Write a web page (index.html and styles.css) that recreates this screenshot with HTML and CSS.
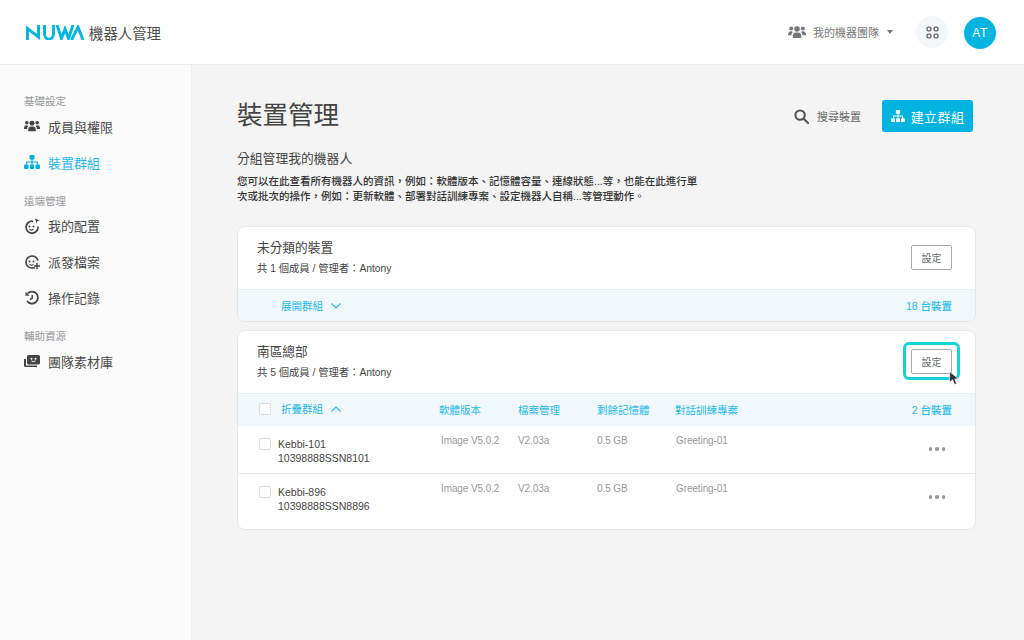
FILE: index.html
```html
<!DOCTYPE html>
<html lang="zh-Hant">
<head>
    <meta charset="UTF-8">
    <meta name="viewport" content="width=device-width, initial-scale=1.0">
    <title>機器人管理</title>
    <link rel="stylesheet" href="styles.css">
</head>
<body>

    <svg class="defs" width="0" height="0">
        <symbol id="org" viewBox="0 0 16 14">
            <rect x="5.5" y="0" width="5" height="4.5" rx="1"/>
            <rect x="0" y="9.5" width="4.5" height="4.5" rx="1"/>
            <rect x="5.75" y="9.5" width="4.5" height="4.5" rx="1"/>
            <rect x="11.5" y="9.5" width="4.5" height="4.5" rx="1"/>
            <path d="M7.4 4h1.2v2.4h5.300v3.200h-1.200V7.600H8.600v2H7.400v-2H3.300v2H2.100V6.400h5.300z"/>
        </symbol>
        <symbol id="users" viewBox="0 0 18 14">
            <circle cx="9" cy="4" r="2.8"/>
            <circle cx="3.2" cy="3.4" r="2"/>
            <circle cx="14.8" cy="3.4" r="2"/>
            <path d="M4.8 13v-2.600C4.800 8.600 6.200 7.600 7.600 7.600h2.800c1.400 0 2.800 1 2.800 2.800V13z"/>
            <path d="M0 9.600C0 7.600 1.200 6.200 3 6.200c.8 0 1.400.2 1.900.7-.9.8-1.400 2-1.400 3.400H0zM18 9.600c0-2-1.200-3.400-3-3.400-.8 0-1.400.2-1.900.7.9.8 1.400 2 1.400 3.400H18z"/>
        </symbol>
    </svg>

    <header class="topbar">
        <div class="brand">
            <svg class="logo" viewBox="0 0 58 15" width="58" height="15">
                <path d="M1.5 15V3.500L12.500 12V0M18.500 0v8.500c0 7.500 9 7.500 9 0V0M31 0l4.500 13.500L39 4l3.500 9.500L47 0M45.500 15L52 2l5 13" fill="none" stroke="#00b4e0" stroke-width="2.9"/>
            </svg>
            <span class="brand-name">機器人管理</span>
        </div>
        <div class="top-actions">
            <svg class="team-icon"><use href="#users"/></svg>
            <span class="team-name">我的機器團隊</span>
            <span class="caret"></span>
            <button type="button" class="apps-btn">
                <svg viewBox="0 0 12 12" width="13" height="13" fill="none" stroke="#666" stroke-width="1.3">
                    <rect x="1" y="1" width="3.5" height="3.5" rx="1"/>
                    <rect x="7.5" y="1" width="3.5" height="3.5" rx="1"/>
                    <rect x="1" y="7.5" width="3.5" height="3.5" rx="1"/>
                    <rect x="7.5" y="7.5" width="3.5" height="3.5" rx="1"/>
                </svg>
            </button>
            <div class="avatar">AT</div>
        </div>
    </header>

    <div class="layout">
        <nav class="sidebar">
            <div class="nav-label">基礎設定</div>
            <a class="nav-item"><svg class="nav-icon solid"><use href="#users"/></svg>成員與權限</a>
            <a class="nav-item active"><svg class="nav-icon solid"><use href="#org"/></svg>裝置群組</a>

            <div class="nav-label">遠端管理</div>
            <a class="nav-item">
                <svg class="nav-icon" viewBox="0 0 16 16" fill="none" stroke="#444" stroke-width="1.7">
                    <path d="M9 3.300A6 6 0 1 0 14 8.500"/>
                    <circle cx="5.5" cy="8.5" r="1" fill="#444" stroke="none"/>
                    <circle cx="9.5" cy="8.5" r="1" fill="#444" stroke="none"/>
                    <path d="M5.500 11.300q2 1.500 4 0" stroke-width="1.3"/>
                    <path d="M11 .5l4.500 2-2.200.8-.7 2.200z" fill="#444" stroke="none"/>
                </svg>我的配置</a>
            <a class="nav-item">
                <svg class="nav-icon" viewBox="0 0 16 16" fill="none" stroke="#444" stroke-width="1.7">
                    <path d="M14 6.500C13 3.500 10.500 2 8 2a6 6 0 0 0 0 12c1 0 2-.2 2.700-.6"/>
                    <circle cx="5.5" cy="7.5" r="1" fill="#444" stroke="none"/>
                    <circle cx="9.5" cy="7.5" r="1" fill="#444" stroke="none"/>
                    <path d="M5.500 10.500q2 1.300 4 0" stroke-width="1.3"/>
                    <path d="M13 9v6M10 12h6" stroke-width="1.4"/>
                </svg>派發檔案</a>
            <a class="nav-item">
                <svg class="nav-icon" viewBox="0 0 16 16" fill="none" stroke="#444" stroke-width="1.8">
                    <path d="M3.500 3.500A6 6 0 1 1 3 11"/>
                    <path d="M1.500 1.800v4h4z" fill="#444" stroke="none"/>
                    <path d="M8.200 5v3.300L6 9.500" stroke-width="1.5"/>
                </svg>操作記錄</a>

            <div class="nav-label">輔助資源</div>
            <a class="nav-item">
                <svg class="nav-icon" viewBox="0 0 16 16">
                    <path d="M0 6h2v6.500h11V14H1.500A1.500 1.500 0 0 1 0 12.500z" fill="#444"/>
                    <rect x="3" y="2" width="13" height="9.5" rx="1.5" fill="#444"/>
                    <circle cx="7.5" cy="5.8" r="1" fill="#fafafa"/>
                    <circle cx="11.5" cy="5.8" r="1" fill="#fafafa"/>
                    <path d="M7.500 8q2 1.300 4 0" fill="none" stroke="#fafafa"/>
                </svg>團隊素材庫</a>
        </nav>

        <main class="content">
            <div class="page-head">
                <h1>裝置管理</h1>
                <div class="page-actions">
                    <span class="search">
                        <svg viewBox="0 0 16 16" width="15" height="15" fill="none" stroke="#555" stroke-width="2.2">
                            <circle cx="6.5" cy="6.5" r="5"/>
                            <path d="M10.300 10.300L15 15" stroke-linecap="round"/>
                        </svg>
                        搜尋裝置
                    </span>
                    <button type="button" class="primary-btn"><svg class="btn-icon"><use href="#org"/></svg>建立群組</button>
                </div>
            </div>

            <h2>分組管理我的機器人</h2>
            <p class="intro">您可以在此查看所有機器人的資訊&#xFF0C;例如&#xFF1A;軟體版本、記憶體容量、連線狀態...等&#xFF0C;也能在此進行單<br>次或批次的操作&#xFF0C;例如&#xFF1A;更新軟體、部署對話訓練專案、設定機器人自稱...等管理動作。</p>

            <section class="card first">
                <div class="card-head">
                    <div>
                        <h3>未分類的裝置</h3>
                        <div class="meta">共 1 個成員 / 管理者&#xFF1A;Antony</div>
                    </div>
                    <button type="button" class="set-btn">設定</button>
                </div>
                <div class="strip">
                    <span class="toggle">展開群組</span>
                    <svg class="chev" viewBox="0 0 10 6" width="10" height="6"><path d="M.5.5L5 5l4.500-4.500"/></svg>
                    <span class="count">18 台裝置</span>
                </div>
            </section>

            <section class="card">
                <div class="card-head">
                    <div>
                        <h3>南區總部</h3>
                        <div class="meta">共 5 個成員 / 管理者&#xFF1A;Antony</div>
                    </div>
                    <div class="focus-ring"><button type="button" class="set-btn">設定</button></div>
                    <svg class="cursor" viewBox="0 0 11 14" width="12" height="15">
                        <path d="M.5.5v10l2.700-2.400 1.800 4.400 2-.8-1.800-4.300h3.600z" fill="#333" stroke="#fff" stroke-width=".6"/>
                    </svg>
                </div>
                <div class="strip open">
                    <span class="check"></span>
                    <span class="toggle">折疊群組</span>
                    <svg class="chev" viewBox="0 0 10 6" width="10" height="6"><path d="M.5 5.500L5 1l4.500 4.500"/></svg>
                    <span class="col c1">軟體版本</span>
                    <span class="col c2">檔案管理</span>
                    <span class="col c3">剩餘記憶體</span>
                    <span class="col c4">對話訓練專案</span>
                    <span class="count">2 台裝置</span>
                </div>
                <div class="row">
                    <span class="check"></span>
                    <div class="device">Kebbi-101<br>10398888SSN8101</div>
                    <span class="cell c1">Image V5.0.2</span>
                    <span class="cell c2">V2.03a</span>
                    <span class="cell c3">0.5 GB</span>
                    <span class="cell c4">Greeting-01</span>
                    <span class="more"><i></i><i></i><i></i></span>
                </div>
                <div class="row last">
                    <span class="check"></span>
                    <div class="device">Kebbi-896<br>10398888SSN8896</div>
                    <span class="cell c1">Image V5.0.2</span>
                    <span class="cell c2">V2.03a</span>
                    <span class="cell c3">0.5 GB</span>
                    <span class="cell c4">Greeting-01</span>
                    <span class="more"><i></i><i></i><i></i></span>
                </div>
            </section>
        </main>
    </div>

</body>
</html>
```

FILE: styles.css
```css
* {
    box-sizing: border-box;
}
html, body {
    height: 100%;
}
body {
    margin: 0;
    overflow: hidden;
    font-family: "Liberation Sans", "Noto Sans CJK TC", sans-serif;
    color: #444;
    background-color: #f4f4f4;
}
.defs {
    position: absolute;
}
.topbar {
    height: 65px;
    background: white;
    border-bottom: 1px solid #ececec;
    display: flex;
    align-items: center;
    justify-content: space-between;
    padding: 0 28px 0 26px;
}
.brand {
    display: flex;
    align-items: center;
    gap: 5px;
}
.brand-name {
    font-size: 14.4px;
    color: #4a4a4a;
}
.top-actions {
    display: flex;
    align-items: center;
}
.team-icon {
    width: 18px;
    height: 14px;
    fill: #777;
    margin-right: 7px;
}
.team-name {
    font-size: 11px;
    color: #777;
}
.caret {
    width: 0;
    height: 0;
    margin: 0 23px 0 8px;
    border-left: 3.5px solid transparent;
    border-right: 3.5px solid transparent;
    border-top: 4px solid #777;
}
.apps-btn {
    width: 32px;
    height: 32px;
    padding: 0;
    border: none;
    border-radius: 50%;
    background-color: #f2f7fa;
    display: flex;
    align-items: center;
    justify-content: center;
    margin-right: 16px;
}
.avatar {
    width: 32px;
    height: 32px;
    margin-top: 2px;
    border-radius: 50%;
    background-color: #00b4e0;
    color: white;
    font-size: 12px;
    letter-spacing: .5px;
    display: flex;
    align-items: center;
    justify-content: center;
}
.layout {
    display: flex;
    height: 575px;
}
.sidebar {
    width: 192px;
    flex: none;
    background-color: #fafafa;
    border-right: 1px solid #eeeeee;
    padding: 29px 0 0 24px;
}
.nav-label {
    font-size: 10.5px;
    line-height: 15px;
    color: #999;
}
.nav-item {
    display: flex;
    align-items: center;
    height: 36px;
    font-size: 13px;
    color: #4a4a4a;
}
.nav-label + .nav-item {
    margin-top: -1px;
}
.nav-item + .nav-label {
    margin-top: 13.5px;
}
.nav-item.active {
    color: #26b8e6;
}
.nav-icon {
    width: 16px;
    height: 16px;
    margin-right: 8px;
    flex: none;
}
.nav-icon.solid {
    fill: #444;
}
.nav-item.active .nav-icon {
    fill: #00aede;
}
.content {
    flex: 1;
    padding: 35px 48px 0 45px;
}
.page-head {
    display: flex;
    align-items: center;
    justify-content: space-between;
    height: 32px;
    padding-right: 3px;
}
h1 {
    margin: -2px 0 0;
    font-size: 25.5px;
    line-height: 32px;
    font-weight: 400;
    color: #444;
}
.page-actions {
    display: flex;
    align-items: center;
}
.search {
    display: flex;
    align-items: center;
    gap: 8px;
    font-size: 11px;
    color: #666;
    margin-right: 21px;
}
.primary-btn {
    width: 91px;
    height: 32px;
    border: none;
    border-radius: 3px;
    background-color: #00b4e0;
    color: white;
    font-family: inherit;
    font-size: 13px;
    letter-spacing: .4px;
    display: flex;
    align-items: center;
    justify-content: center;
    padding: 0;
}
.btn-icon {
    width: 14px;
    height: 12px;
    fill: white;
    margin-right: 6px;
}
h2 {
    margin: 17px 0 0;
    font-size: 12.8px;
    line-height: 19px;
    font-weight: 400;
    color: #444;
}
.intro {
    margin: 5.5px 0 0;
    font-size: 10.5px;
    line-height: 15px;
    font-weight: 500;
    color: #333;
}
.card {
    background: white;
    border: 1px solid #e6e6e6;
    border-radius: 8px;
    margin-top: 8px;
    overflow: hidden;
}
.card.first {
    margin-top: 22.5px;
}
.card-head {
    position: relative;
    height: 62px;
    display: flex;
    align-items: center;
    justify-content: space-between;
    padding: 0 23px 2px 19px;
}
h3 {
    margin: 0;
    font-size: 12.7px;
    line-height: 18px;
    font-weight: 400;
    color: #444;
}
.meta {
    margin-top: 5px;
    font-size: 10.3px;
    line-height: 14px;
    color: #444;
}
.set-btn {
    width: 41px;
    height: 25px;
    padding: 0;
    background: white;
    border: 1px solid #aaaaaa;
    border-radius: 2px;
    font-family: inherit;
    font-size: 10px;
    color: #666;
}
.focus-ring {
    margin: 0 -8px;
    padding: 3.5px 5px;
    border: 3px solid #12d3d6;
    border-radius: 6px;
    display: flex;
}
.cursor {
    position: absolute;
    right: 14px;
    top: 40px;
}
.strip {
    height: 32px;
    background-color: #f1f8fb;
    border-top: 1px solid #e6eef2;
    display: flex;
    align-items: center;
    padding: 0 23px 0 43px;
    font-size: 10.5px;
    color: #26b8e6;
}
.strip.open {
    height: 33px;
    padding-left: 21px;
    padding-bottom: 2px;
    position: relative;
}
.strip.open .check {
    margin-right: 10px;
}
.toggle {
    line-height: 14px;
}
.chev {
    margin-left: 8px;
    fill: none;
    stroke: #26b8e6;
    stroke-width: 1.1;
}
.count {
    margin-left: auto;
    font-weight: 500;
}
.check {
    width: 12px;
    height: 12px;
    flex: none;
    background: white;
    border: 1px solid #dddddd;
    border-radius: 2px;
}
.col, .cell {
    position: absolute;
}
.row {
    position: relative;
    height: 48px;
    border-bottom: 1px solid #e3ecf0;
    padding: 11px 0 0 21px;
    display: flex;
    align-items: flex-start;
    font-size: 10.5px;
}
.row .check {
    margin-top: 1px;
}
.row.last {
    height: 55px;
    border-bottom: none;
}
.device {
    margin: 0 0 0 7px;
    line-height: 14px;
    color: #444;
}
.cell {
    top: 9px;
    color: #999;
    font-size: 10px;
    letter-spacing: -.1px;
}
.col.c1 { left: 201px; }
.col.c2 { left: 280px; }
.col.c3 { left: 359px; }
.col.c4 { left: 437px; }
.cell.c1 { left: 203px; }
.cell.c2 { left: 280px; }
.cell.c3 { left: 359px; }
.cell.c4 { left: 438px; }
.more {
    position: absolute;
    right: 30px;
    top: 21px;
    display: flex;
    gap: 3px;
}
.more i {
    width: 3.5px;
    height: 3.5px;
    border-radius: 50%;
    background-color: #999;
}
```
